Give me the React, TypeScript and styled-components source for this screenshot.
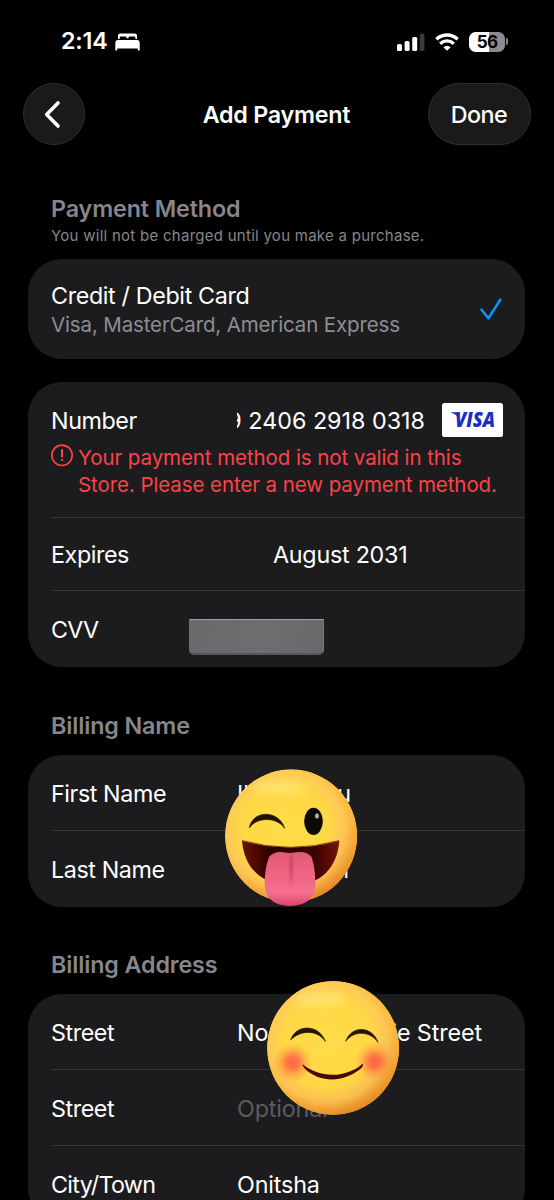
import React from "react";
import styled, { createGlobalStyle } from "styled-components";

const GlobalStyle = createGlobalStyle`
  html, body { margin: 0; background: #000; }
  body { width: 554px; height: 1200px; overflow: hidden; }
  * { box-sizing: border-box; }
`;

const Screen = styled.main`
  position: relative;
  width: 554px;
  height: 1200px;
  overflow: hidden;
  background: #000;
  color: #fff;
  font-family: Inter, "Liberation Sans", sans-serif;
  font-size: 23.3px;
  line-height: 28px;
  white-space: nowrap;
`;

const StatusBar = styled.header`
  display: flex;
  align-items: center;
  justify-content: space-between;
  height: 83px;
  padding: 0 46px 0 61px;
`;

const StatusGroup = styled.div`
  display: flex;
  align-items: center;
`;

const Time = styled.span`
  width: 54px;
  padding-bottom: 1px;
  font-size: 23.3px;
  font-weight: 600;
  letter-spacing: -0.2px;
`;

const WifiSlot = styled.span`
  display: flex;
  margin-left: 10px;
`;

const Battery = styled.div`
  display: flex;
  align-items: center;
  justify-content: center;
  width: 36px;
  height: 20px;
  margin-left: 10px;
  border-radius: 6.5px;
  background: linear-gradient(90deg, #fff 56%, #8b8b8b 56%);
  color: #000;
  font-size: 17px;
  font-weight: 700;
  letter-spacing: -0.6px;
`;

const BatteryTip = styled.i`
  width: 2px;
  height: 7px;
  margin-left: 1px;
  border-radius: 0 2px 2px 0;
  background: #8b8b8b;
`;

const NavBar = styled.nav`
  display: flex;
  align-items: center;
  justify-content: space-between;
  height: 62px;
  padding: 0 23px;
`;

const GlassButton = styled.button<{ $width: number }>`
  display: flex;
  align-items: center;
  justify-content: center;
  width: ${(p) => p.$width}px;
  height: 62px;
  padding: 0 1px 0 0;
  border: 1.5px solid #303030;
  border-radius: 31px;
  background: #1a1a1a;
  color: #fff;
  font: 500 23.3px/28px Inter, sans-serif;
  letter-spacing: -0.5px;
`;

const ButtonLabel = styled.span`
  padding-top: 2px;
`;

const Title = styled.h1`
  flex: 1;
  margin: 0;
  padding: 2px 0 0 40px;
  text-align: center;
  font-size: 23.3px;
  font-weight: 600;
  letter-spacing: -0.25px;
`;

const Content = styled.div`
  padding: 0 29px 0 28px;
`;

const SectionHead = styled.div<{ $height: number; $top: number }>`
  height: ${(p) => p.$height}px;
  padding: ${(p) => p.$top}px 0 0 23px;
  color: #86868b;
`;

const SectionTitle = styled.h2`
  margin: 0;
  font-size: 23.3px;
  line-height: 28px;
  font-weight: 600;
  letter-spacing: -0.12px;
`;

const SectionNote = styled.p`
  margin: 0;
  font-size: 15px;
  line-height: 26px;
  letter-spacing: 0.27px;
`;

const Card = styled.section<{ $gap?: number }>`
  margin-top: ${(p) => p.$gap ?? 0}px;
  overflow: hidden;
  border-radius: 34px;
  background: #1c1c1e;
`;

const MethodRow = styled.div`
  display: flex;
  align-items: center;
  justify-content: space-between;
  height: 100px;
  padding: 2px 22px 0 23px;
`;

const MethodName = styled.div`
  line-height: 30px;
  letter-spacing: -0.36px;
`;

const MethodBrands = styled.div`
  color: #8d8d93;
  font-size: 20.5px;
  line-height: 28px;
  letter-spacing: -0.14px;
`;

const CheckIcon = styled.svg`
  margin-top: -3px;
`;

const Row = styled.div<{ $height: number; $line?: boolean }>`
  display: flex;
  align-items: center;
  height: ${(p) => p.$height}px;
  margin-left: 23px;
  padding-top: 2px;
  border-bottom: ${(p) => (p.$line ? "1.5px solid #363638" : "none")};
`;

const Label = styled.label<{ $tight?: boolean }>`
  width: 186px;
  letter-spacing: ${(p) => (p.$tight ? "-0.7px" : "-0.42px")};
`;

const Value = styled.span<{ $muted?: boolean }>`
  color: ${(p) => (p.$muted ? "#5b5b60" : "#fff")};
  letter-spacing: -0.15px;
`;

const SplitValue = styled.span<{ $width: number }>`
  display: flex;
  justify-content: space-between;
  width: ${(p) => p.$width}px;
  letter-spacing: -0.1px;
`;

const NumberBlock = styled.div`
  height: 136px;
  margin-left: 23px;
  border-bottom: 1.5px solid #363638;
`;

const NumberLine = styled.div`
  display: flex;
  align-items: center;
  height: 62px;
  padding: 15px 22px 0 0;
`;

const NumberField = styled.span`
  display: flex;
  justify-content: flex-end;
  width: 188px;
  overflow: hidden;
`;

const VisaBadge = styled.span`
  display: flex;
  align-items: center;
  justify-content: center;
  width: 61px;
  height: 34px;
  margin-left: 17px;
  margin-top: -2px;
  border-radius: 2.5px;
  background: #fff;
`;

const ErrorMessage = styled.div`
  display: flex;
  color: #fb4249;
  font-size: 20.5px;
  line-height: 27px;
  letter-spacing: -0.08px;
`;

const ErrorText = styled.p`
  margin: 0 0 0 4px;
`;

const DateValue = styled.span`
  padding-left: 36px;
  letter-spacing: -0.25px;
`;

const Redaction = styled.span`
  width: 135px;
  height: 36px;
  margin: 13px 0 0 -48px;
  border: solid;
  border-width: 1.5px 1px 2.5px 1px;
  border-color: #a0a0a8 #77777e #55555b #666d88;
  border-radius: 1px 1px 5px 5px;
  background: linear-gradient(100deg, #68696b, #6d6e70 55%, #67686a);
`;

const Sticker = styled.svg<{ $x: number; $y: number }>`
  position: absolute;
  left: ${(p) => p.$x}px;
  top: ${(p) => p.$y}px;
`;

const BedIcon = () => (
  <svg width="26" height="18" viewBox="0 0 26 18" fill="#fff">
    <path d="M3 6V2.800Q3 .5 5.300.5h14.400Q22 .5 22 2.800V6h-1.600V4.700Q20.400 3.500 19.200 3.500H14.500Q13.500 3.500 13.500 4.500V5.300H11.500V4.500Q11.500 3.500 10.500 3.500H5.900Q4.700 3.500 4.700 4.700V6Z" />
    <path d="M.3 10Q.3 7 3 7h19Q24.700 7 24.700 10v7.400h-1.900v-2H2.200v2H.3Z" />
  </svg>
);

const SignalIcon = () => (
  <svg width="28" height="18" viewBox="0 0 28 18" fill="#fff">
    <rect x="0" y="11" width="5" height="7" rx="1.6" />
    <rect x="7.600" y="8" width="5" height="10" rx="1.6" />
    <rect x="15.200" y="4" width="5" height="14" rx="1.6" />
    <rect x="22.800" y="0.500" width="4.600" height="17.500" rx="1.6" fill="#3a3a3a" />
  </svg>
);

const WifiIcon = () => (
  <svg width="24" height="18" viewBox="0 0 24 18" fill="none" stroke="#fff" strokeWidth="3.300">
    <path d="M1.300 6.200Q6 2 12 2t10.700 4.200" />
    <path d="M5.200 10.700Q8.200 7.900 12 7.900t6.800 2.800" />
    <path d="M12 17.800 8.400 14.300Q10 12.700 12 12.700t3.600 1.600Z" fill="#fff" stroke="none" />
  </svg>
);

const VisaMark = () => (
  <svg width="61" height="34" viewBox="0 0 61 34">
    <path d="M9 9.200h5.400q1.300 0 1.600 1.600l.8 4.200Q14 11 9 9.800Z" fill="#1a2fc0" />
    <text
      x="13"
      y="24"
      textLength="40"
      lengthAdjust="spacingAndGlyphs"
      fontFamily="Open Sans, sans-serif"
      fontWeight="800"
      fontStyle="italic"
      fontSize="20.500"
      fill="#1a2fc0"
    >
      VISA
    </text>
  </svg>
);

const AlertIcon = () => (
  <svg width="23" height="23" viewBox="0 0 23 23" fill="none" stroke="#fb4249" strokeLinecap="round">
    <circle cx="11" cy="11.300" r="10.200" strokeWidth="1.700" />
    <path d="M11 6v6.700" strokeWidth="2" />
    <circle cx="11" cy="16.100" r=".7" fill="#fb4249" strokeWidth="1" />
  </svg>
);

const FaceGradients = ({ id }: { id: string }) => (
  <>
    <linearGradient id={`${id}-base`} x1="0.300" y1="0" x2="0.700" y2="1">
      <stop offset="0" stopColor="#fdc93c" />
      <stop offset="0.550" stopColor="#fcb93c" />
      <stop offset="1" stopColor="#e08226" />
    </linearGradient>
    <radialGradient id={`${id}-glow`} cx="0.460" cy="0.460" r="0.560">
      <stop offset="0" stopColor="#ffdd48" />
      <stop offset="0.600" stopColor="#ffd945" stopOpacity="0.950" />
      <stop offset="0.800" stopColor="#ffce62" stopOpacity="0.650" />
      <stop offset="1" stopColor="#f5a62b" stopOpacity="0" />
    </radialGradient>
    <filter id={`${id}-soft`} x="-100%" y="-150%" width="300%" height="400%">
      <feGaussianBlur stdDeviation="15" />
    </filter>
  </>
);

const WinkFace = () => (
  <Sticker $x={225} $y={769} width="133" height="138" viewBox="30 42 399 414">
    <defs>
      <FaceGradients id="wink" />
      <linearGradient id="wink-tongue" x1="0" y1="0" x2="0" y2="1">
        <stop offset="0" stopColor="#e05a74" />
        <stop offset="0.400" stopColor="#ef6583" />
        <stop offset="0.750" stopColor="#f56f90" />
        <stop offset="1" stopColor="#d9456c" />
      </linearGradient>
      <linearGradient id="wink-mouth" x1="0" y1="0" x2="1" y2="0">
        <stop offset="0" stopColor="#6b1006" />
        <stop offset="0.300" stopColor="#2c0000" />
        <stop offset="0.750" stopColor="#3c0202" />
        <stop offset="1" stopColor="#751408" />
      </linearGradient>
      <filter id="wink-fold" x="-300%" y="-20%" width="700%" height="140%">
        <feGaussianBlur stdDeviation="4" />
      </filter>
      <clipPath id="wink-clip">
        <ellipse cx="228.500" cy="243" rx="198.500" ry="200" />
      </clipPath>
    </defs>
    <g clipPath="url(#wink-clip)">
      <ellipse cx="228.500" cy="243" rx="198.500" ry="200" fill="url(#wink-base)" />
      <ellipse cx="228.500" cy="243" rx="198.500" ry="200" fill="url(#wink-glow)" />
      <ellipse cx="190" cy="98" rx="80" ry="18" fill="#fff0a0" opacity="0.500" filter="url(#wink-soft)" />
    </g>
    <path d="M103 219C112 164 192 164 209 220C187 186 125 184 103 219Z" fill="#211103" stroke="#211103" strokeWidth="2" strokeLinejoin="round" />
    <ellipse cx="295.500" cy="199" rx="28" ry="41" fill="#0d0a06" />
    <ellipse cx="306" cy="183" rx="6" ry="8" fill="#b0b0b0" />
    <path d="M81 257Q225 297 373 257C367 336 320 391 228 391S87 334 81 257Z" fill="url(#wink-mouth)" />
    <path d="M82 257Q225 297 372 257" fill="none" stroke="#7d4508" strokeWidth="3" />
    <path d="M162 306Q178 287 206 292Q224 296 242 292Q274 287 290 306Q302 345 301 388C300 430 271 453 225 453S150 430 149 388Q148 345 162 306Z" fill="url(#wink-tongue)" />
    <path d="M226 301Q222 350 227 396Q235 352 232 301Z" fill="#b82e55" opacity="0.750" filter="url(#wink-fold)" />
  </Sticker>
);

const BlushFace = () => (
  <Sticker $x={267} $y={981} width="133" height="134" viewBox="126 33 399 402">
    <defs>
      <FaceGradients id="blush" />
      <clipPath id="blush-clip">
        <ellipse cx="324.500" cy="234" rx="198.500" ry="201" />
      </clipPath>
      <radialGradient id="blush-cheek">
        <stop offset="0" stopColor="#ff5a45" stopOpacity="0.950" />
        <stop offset="0.300" stopColor="#ff6044" stopOpacity="0.800" />
        <stop offset="0.650" stopColor="#ff7c40" stopOpacity="0.350" />
        <stop offset="1" stopColor="#ff9a3c" stopOpacity="0" />
      </radialGradient>
    </defs>
    <g clipPath="url(#blush-clip)">
      <ellipse cx="324.500" cy="234" rx="198.500" ry="201" fill="url(#blush-base)" />
      <ellipse cx="324.500" cy="234" rx="198.500" ry="201" fill="url(#blush-glow)" />
      <ellipse cx="285" cy="88" rx="80" ry="18" fill="#fff0a0" opacity="0.500" filter="url(#blush-soft)" />
      <ellipse cx="203" cy="278" rx="62" ry="62" fill="url(#blush-cheek)" />
      <ellipse cx="449" cy="275" rx="62" ry="62" fill="url(#blush-cheek)" />
    </g>
    <path d="M197 210C212 163 280 160 301 214C277 178 225 180 197 210Z" fill="#251405" stroke="#251405" strokeWidth="2" strokeLinejoin="round" />
    <path d="M362 214C380 164 442 168 459 217C435 183 388 180 362 214Z" fill="#251405" stroke="#251405" strokeWidth="2" strokeLinejoin="round" />
    <path d="M233 283C282 324 361 326 413 281C416 284 413 292 405 298C355 337 288 340 241 298Q232 289 233 283Z" fill="#4a0804" />
  </Sticker>
);

export default function App() {
  return (
    <>
      <GlobalStyle />
      <Screen>
        <StatusBar>
          <StatusGroup>
            <Time>2:14</Time>
            <BedIcon />
          </StatusGroup>
          <StatusGroup>
            <SignalIcon />
            <WifiSlot>
              <WifiIcon />
            </WifiSlot>
            <Battery>56</Battery>
            <BatteryTip />
          </StatusGroup>
        </StatusBar>

        <NavBar>
          <GlassButton $width={62} aria-label="Back">
            <svg width="20" height="30" viewBox="0 0 20 30" fill="none" stroke="#fff" strokeWidth="3.600" strokeLinecap="round" strokeLinejoin="round">
              <path d="M14 4 2.700 15.500l11.300 11.500" />
            </svg>
          </GlassButton>
          <Title>Add Payment</Title>
          <GlassButton $width={103}>
            <ButtonLabel>Done</ButtonLabel>
          </GlassButton>
        </NavBar>

        <Content>
          <SectionHead $height={114} $top={50}>
            <SectionTitle>Payment Method</SectionTitle>
            <SectionNote>You will not be charged until you make a purchase.</SectionNote>
          </SectionHead>
          <Card>
            <MethodRow>
              <div>
                <MethodName>Credit / Debit Card</MethodName>
                <MethodBrands>Visa, MasterCard, American Express</MethodBrands>
              </div>
              <CheckIcon width="24" height="24" viewBox="0 0 24 24" fill="none" stroke="#0a91ff" strokeWidth="2.600" strokeLinecap="round" strokeLinejoin="round">
                <path d="M2.500 12.700 9.500 21.300 21.300 2.800" />
              </CheckIcon>
            </MethodRow>
          </Card>

          <Card $gap={23}>
            <NumberBlock>
              <NumberLine>
                <Label>Number</Label>
                <NumberField>
                  <span>9 2406 2918 0318</span>
                </NumberField>
                <VisaBadge>
                  <VisaMark />
                </VisaBadge>
              </NumberLine>
              <ErrorMessage>
                <AlertIcon />
                <ErrorText>
                  Your payment method is not valid in this
                  <br />
                  Store. Please enter a new payment method.
                </ErrorText>
              </ErrorMessage>
            </NumberBlock>
            <Row $height={73} $line>
              <Label>Expires</Label>
              <DateValue>August 2031</DateValue>
            </Row>
            <Row $height={76}>
              <Label $tight>CVV</Label>
              <Redaction />
            </Row>
          </Card>

          <SectionHead $height={88} $top={45}>
            <SectionTitle>Billing Name</SectionTitle>
          </SectionHead>
          <Card>
            <Row $height={76} $line>
              <Label>First Name</Label>
              <SplitValue $width={114}>
                <span>Il</span>
                <span>u</span>
              </SplitValue>
            </Row>
            <Row $height={76}>
              <Label>Last Name</Label>
              <SplitValue $width={112}>
                <span />
                <span>n</span>
              </SplitValue>
            </Row>
          </Card>

          <SectionHead $height={87} $top={44}>
            <SectionTitle>Billing Address</SectionTitle>
          </SectionHead>
          <Card>
            <Row $height={76} $line>
              <Label>Street</Label>
              <SplitValue $width={245}>
                <span>No</span>
                <span>ie Street</span>
              </SplitValue>
            </Row>
            <Row $height={76} $line>
              <Label>Street</Label>
              <Value $muted>Optional</Value>
            </Row>
            <Row $height={76}>
              <Label $tight>City/Town</Label>
              <Value>Onitsha</Value>
            </Row>
          </Card>
        </Content>

        <WinkFace />
        <BlushFace />
      </Screen>
    </>
  );
}
